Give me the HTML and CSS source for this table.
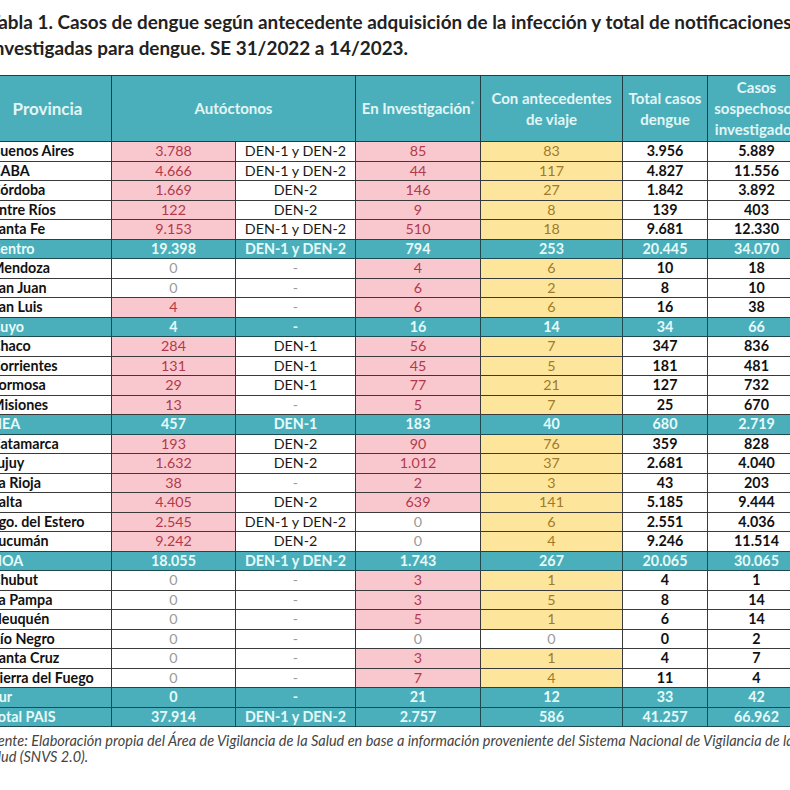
FILE: index.html
```html
<!DOCTYPE html>
<html lang="es">
<head>
<meta charset="utf-8">
<title>Tabla 1. Casos de dengue</title>
<link rel="stylesheet" href="styles.css">
</head>
<body>
<div class="page">
  <h1 class="title">Tabla 1. Casos de dengue según antecedente adquisición de la infección y total de notificaciones<br>investigadas para dengue. SE 31/2022 a 14/2023.</h1>
  <table class="data">
    <colgroup>
      <col class="c-prov"><col class="c-aut"><col class="c-den"><col class="c-inv"><col class="c-via"><col class="c-tot"><col class="c-sos">
    </colgroup>
    <thead>
      <tr>
        <th class="h-prov">Provincia</th>
        <th colspan="2">Autóctonos</th>
        <th>En Investigación<sup>*</sup></th>
        <th>Con antecedentes<br>de viaje</th>
        <th>Total casos<br>dengue</th>
        <th>Casos<br>sospechosos<br>investigados</th>
      </tr>
    </thead>
    <tbody>
      <tr><td class="prov">Buenos Aires</td><td class="pk">3.788</td><td class="den">DEN-1 y DEN-2</td><td class="pk">85</td><td class="yl">83</td><td class="tot">3.956</td><td class="tot">5.889</td></tr>
      <tr><td class="prov">CABA</td><td class="pk">4.666</td><td class="den">DEN-1 y DEN-2</td><td class="pk">44</td><td class="yl">117</td><td class="tot">4.827</td><td class="tot">11.556</td></tr>
      <tr><td class="prov">Córdoba</td><td class="pk">1.669</td><td class="den">DEN-2</td><td class="pk">146</td><td class="yl">27</td><td class="tot">1.842</td><td class="tot">3.892</td></tr>
      <tr><td class="prov">Entre Ríos</td><td class="pk">122</td><td class="den">DEN-2</td><td class="pk">9</td><td class="yl">8</td><td class="tot">139</td><td class="tot">403</td></tr>
      <tr><td class="prov">Santa Fe</td><td class="pk">9.153</td><td class="den">DEN-1 y DEN-2</td><td class="pk">510</td><td class="yl">18</td><td class="tot">9.681</td><td class="tot">12.330</td></tr>
      <tr class="region"><td class="prov">Centro</td><td>19.398</td><td>DEN-1 y DEN-2</td><td>794</td><td>253</td><td>20.445</td><td>34.070</td></tr>
      <tr><td class="prov">Mendoza</td><td class="zero">0</td><td class="dash">-</td><td class="pk">4</td><td class="yl">6</td><td class="tot">10</td><td class="tot">18</td></tr>
      <tr><td class="prov">San Juan</td><td class="zero">0</td><td class="dash">-</td><td class="pk">6</td><td class="yl">2</td><td class="tot">8</td><td class="tot">10</td></tr>
      <tr><td class="prov">San Luis</td><td class="pk">4</td><td class="dash">-</td><td class="pk">6</td><td class="yl">6</td><td class="tot">16</td><td class="tot">38</td></tr>
      <tr class="region"><td class="prov">Cuyo</td><td>4</td><td>-</td><td>16</td><td>14</td><td>34</td><td>66</td></tr>
      <tr><td class="prov">Chaco</td><td class="pk">284</td><td class="den">DEN-1</td><td class="pk">56</td><td class="yl">7</td><td class="tot">347</td><td class="tot">836</td></tr>
      <tr><td class="prov">Corrientes</td><td class="pk">131</td><td class="den">DEN-1</td><td class="pk">45</td><td class="yl">5</td><td class="tot">181</td><td class="tot">481</td></tr>
      <tr><td class="prov">Formosa</td><td class="pk">29</td><td class="den">DEN-1</td><td class="pk">77</td><td class="yl">21</td><td class="tot">127</td><td class="tot">732</td></tr>
      <tr><td class="prov">Misiones</td><td class="pk">13</td><td class="dash">-</td><td class="pk">5</td><td class="yl">7</td><td class="tot">25</td><td class="tot">670</td></tr>
      <tr class="region"><td class="prov">NEA</td><td>457</td><td>DEN-1</td><td>183</td><td>40</td><td>680</td><td>2.719</td></tr>
      <tr><td class="prov">Catamarca</td><td class="pk">193</td><td class="den">DEN-2</td><td class="pk">90</td><td class="yl">76</td><td class="tot">359</td><td class="tot">828</td></tr>
      <tr><td class="prov">Jujuy</td><td class="pk">1.632</td><td class="den">DEN-2</td><td class="pk">1.012</td><td class="yl">37</td><td class="tot">2.681</td><td class="tot">4.040</td></tr>
      <tr><td class="prov">La Rioja</td><td class="pk">38</td><td class="dash">-</td><td class="pk">2</td><td class="yl">3</td><td class="tot">43</td><td class="tot">203</td></tr>
      <tr><td class="prov">Salta</td><td class="pk">4.405</td><td class="den">DEN-2</td><td class="pk">639</td><td class="yl">141</td><td class="tot">5.185</td><td class="tot">9.444</td></tr>
      <tr><td class="prov">Sgo. del Estero</td><td class="pk">2.545</td><td class="den">DEN-1 y DEN-2</td><td class="zero">0</td><td class="yl">6</td><td class="tot">2.551</td><td class="tot">4.036</td></tr>
      <tr><td class="prov">Tucumán</td><td class="pk">9.242</td><td class="den">DEN-2</td><td class="zero">0</td><td class="yl">4</td><td class="tot">9.246</td><td class="tot">11.514</td></tr>
      <tr class="region"><td class="prov">NOA</td><td>18.055</td><td>DEN-1 y DEN-2</td><td>1.743</td><td>267</td><td>20.065</td><td>30.065</td></tr>
      <tr><td class="prov">Chubut</td><td class="zero">0</td><td class="dash">-</td><td class="pk">3</td><td class="yl">1</td><td class="tot">4</td><td class="tot">1</td></tr>
      <tr><td class="prov">La Pampa</td><td class="zero">0</td><td class="dash">-</td><td class="pk">3</td><td class="yl">5</td><td class="tot">8</td><td class="tot">14</td></tr>
      <tr><td class="prov">Neuquén</td><td class="zero">0</td><td class="dash">-</td><td class="pk">5</td><td class="yl">1</td><td class="tot">6</td><td class="tot">14</td></tr>
      <tr><td class="prov">Río Negro</td><td class="zero">0</td><td class="dash">-</td><td class="zero">0</td><td class="zero">0</td><td class="tot">0</td><td class="tot">2</td></tr>
      <tr><td class="prov">Santa Cruz</td><td class="zero">0</td><td class="dash">-</td><td class="pk">3</td><td class="yl">1</td><td class="tot">4</td><td class="tot">7</td></tr>
      <tr><td class="prov">Tierra del Fuego</td><td class="zero">0</td><td class="dash">-</td><td class="pk">7</td><td class="yl">4</td><td class="tot">11</td><td class="tot">4</td></tr>
      <tr class="region"><td class="prov">Sur</td><td>0</td><td>-</td><td>21</td><td>12</td><td>33</td><td>42</td></tr>
      <tr class="region"><td class="prov">Total PAIS</td><td>37.914</td><td>DEN-1 y DEN-2</td><td>2.757</td><td>586</td><td>41.257</td><td>66.962</td></tr>
    </tbody>
  </table>
  <p class="source">Fuente: Elaboración propia del Área de Vigilancia de la Salud en base a información proveniente del Sistema Nacional de Vigilancia de la<br>Salud (SNVS 2.0).</p>
</div>
</body>
</html>
```

FILE: styles.css
```css
html, body {
  margin: 0;
  padding: 0;
  overflow: hidden;
  background: #ffffff;
}

.page {
  margin-left: -17px;
  width: 822px;
  font-family: Lato, "Open Sans", "Liberation Sans", sans-serif;
  color: #111;
}

.title {
  margin: 0 0 14px 6px;
  padding-top: 9px;
  font-size: 18.9px;
  line-height: 26px;
  font-weight: 700;
  color: #222;
  white-space: nowrap;
}

.data {
  border-collapse: collapse;
  table-layout: fixed;
  width: 822px;
  font-size: 14.3px;
}

.c-prov { width: 128px; }
.c-aut { width: 124px; }
.c-den { width: 120px; }
.c-inv { width: 125px; }
.c-via { width: 142px; }
.c-tot { width: 85px; }
.c-sos { width: 98px; }

.data th {
  height: 65px;
  background: #4aafbb;
  color: #e2f6f6;
  font-weight: 700;
  font-size: 15px;
  line-height: 21px;
  border: 1px solid #1f3f44;
  padding: 0;
  text-align: center;
  vertical-align: middle;
  white-space: nowrap;
  overflow: hidden;
}

.data th.h-prov { font-size: 17px; }

.data th sup {
  font-size: 9px;
  vertical-align: 6px;
  line-height: 0;
}

.data td {
  height: 18.5px;
  padding: 0;
  line-height: 18px;
  text-align: center;
  border: 1px solid #3a3a3a;
  white-space: nowrap;
  overflow: hidden;
}

.data td.prov {
  text-align: left;
  padding-left: 7px;
  font-weight: 700;
  color: #111;
}

.data td.pk {
  background: #f9c8ce;
  color: #b03a4c;
}

.data td.yl {
  background: #fde69b;
  color: #a07a2c;
}

.data td.den { color: #1a1a1a; }

.data td.zero,
.data td.dash { color: #9a9a9a; }

.data td.tot {
  font-weight: 700;
  color: #111;
}

.data tr.region td {
  background: #4aafbb;
  color: #e6fafa;
  font-weight: 700;
  border-color: #1f4a50;
}

.data tr.region td.prov { color: #e6fafa; }

.source {
  margin: 6px 0 0 0;
  font-size: 14.5px;
  line-height: 16px;
  font-style: italic;
  color: #444;
  white-space: nowrap;
}
```
